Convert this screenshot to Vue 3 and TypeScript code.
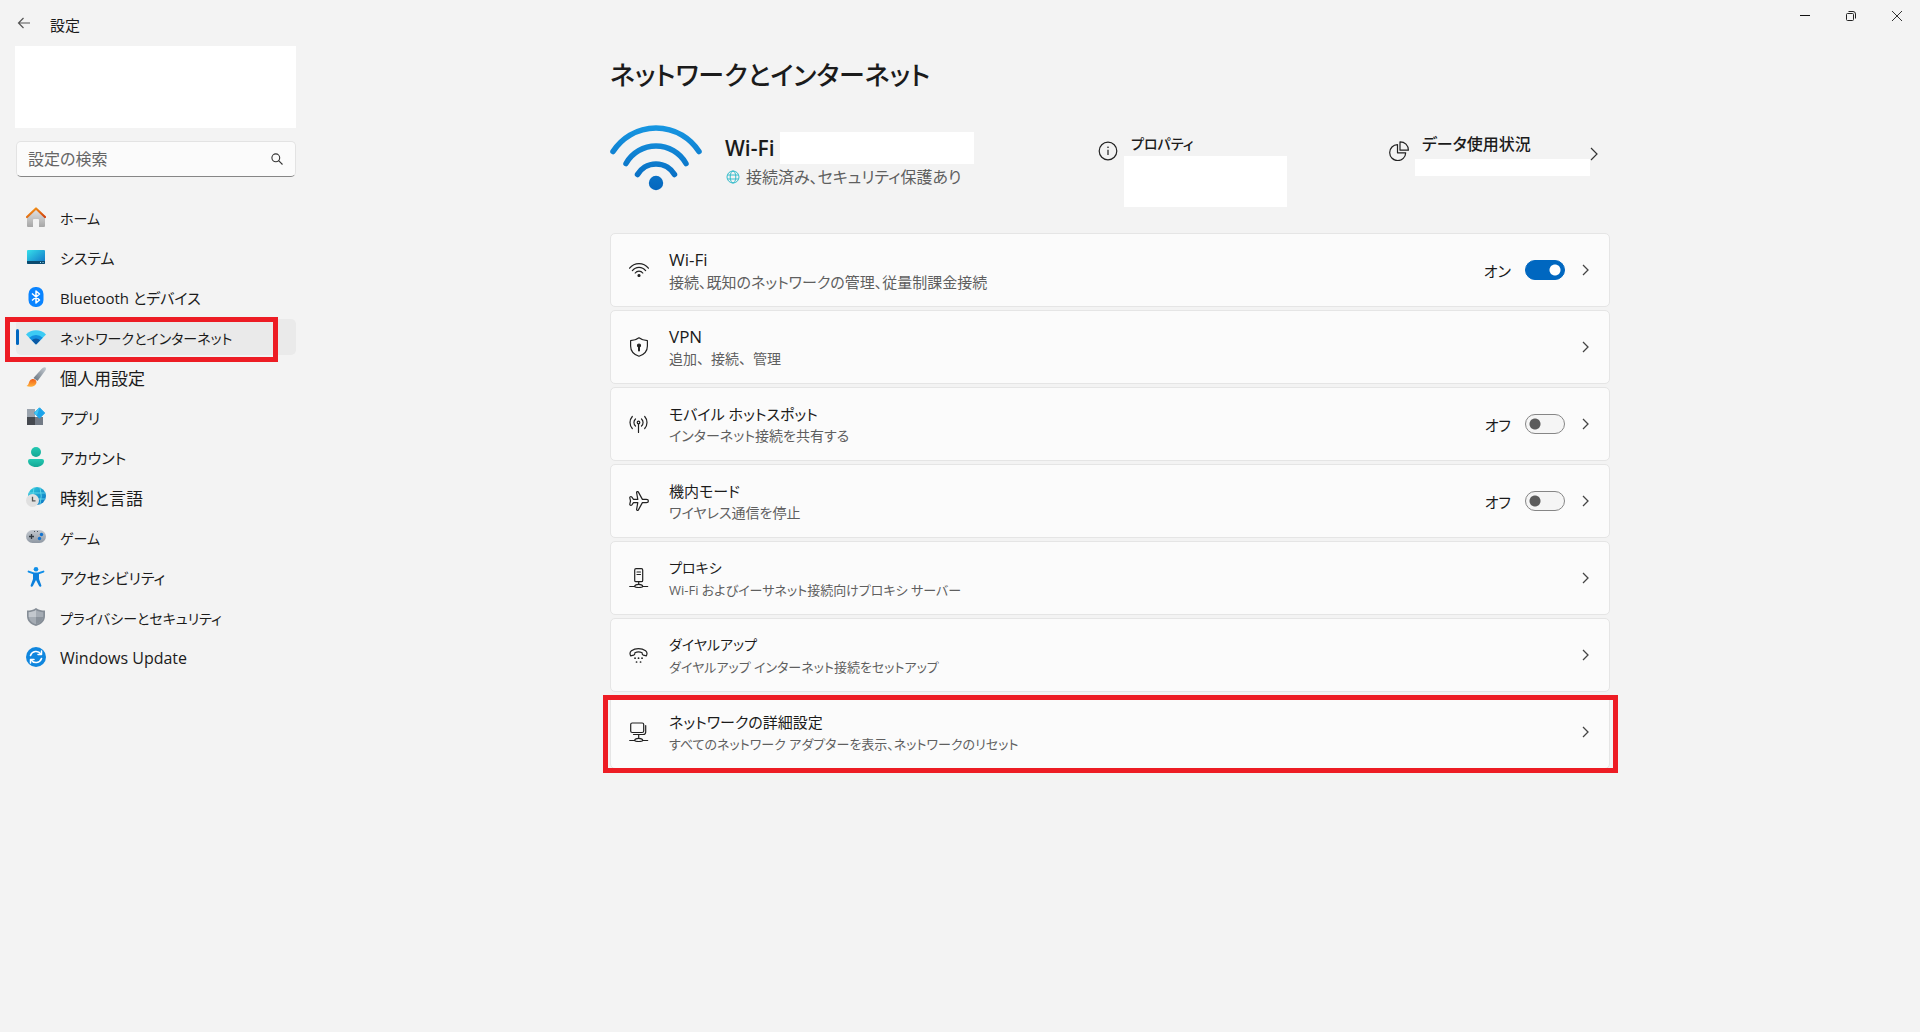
<script setup lang="ts">
import { ref } from 'vue'

type TextSize = 'xs' | 'sm' | 'md' | 'lg' | 'xl' | 'wide'

interface NavItem {
  id: string
  label: string
  size: TextSize
}

interface SettingCard {
  id: string
  title: string
  titleSize: TextSize
  description: string
  descriptionSize: TextSize
  toggle?: boolean
  marked?: boolean
}

const navItems: NavItem[] = [
  { id: 'home', label: 'ホーム', size: 'sm' },
  { id: 'system', label: 'システム', size: 'md' },
  { id: 'bluetooth', label: 'Bluetooth とデバイス', size: 'md' },
  { id: 'network', label: 'ネットワークとインターネット', size: 'sm' },
  { id: 'personal', label: '個人用設定', size: 'xl' },
  { id: 'apps', label: 'アプリ', size: 'md' },
  { id: 'account', label: 'アカウント', size: 'md' },
  { id: 'time', label: '時刻と言語', size: 'xl' },
  { id: 'game', label: 'ゲーム', size: 'sm' },
  { id: 'access', label: 'アクセシビリティ', size: 'md' },
  { id: 'privacy', label: 'プライバシーとセキュリティ', size: 'sm' },
  { id: 'update', label: 'Windows Update', size: 'lg' },
]

const cards: SettingCard[] = [
  { id: 'wifi', title: 'Wi-Fi', titleSize: 'xl', description: '接続、既知のネットワークの管理、従量制課金接続', descriptionSize: 'md', toggle: true },
  { id: 'vpn', title: 'VPN', titleSize: 'xl', description: '追加、接続、管理', descriptionSize: 'wide' },
  { id: 'hotspot', title: 'モバイル ホットスポット', titleSize: 'md', description: 'インターネット接続を共有する', descriptionSize: 'sm', toggle: true },
  { id: 'airplane', title: '機内モード', titleSize: 'md', description: 'ワイヤレス通信を停止', descriptionSize: 'sm', toggle: true },
  { id: 'proxy', title: 'プロキシ', titleSize: 'sm', description: 'Wi-Fi およびイーサネット接続向けプロキシ サーバー', descriptionSize: 'xs' },
  { id: 'dialup', title: 'ダイヤルアップ', titleSize: 'sm', description: 'ダイヤルアップ インターネット接続をセットアップ', descriptionSize: 'xs' },
  { id: 'advanced', title: 'ネットワークの詳細設定', titleSize: 'md', description: 'すべてのネットワーク アダプターを表示、ネットワークのリセット', descriptionSize: 'xs', marked: true },
]

const current = ref('network')
const query = ref('')
const switches = ref<Record<string, boolean>>({ wifi: true, hotspot: false, airplane: false })
</script>

<template>
  <div class="window">
    <header class="titlebar">
      <button class="back" type="button" aria-label="戻る">
        <svg width="14" height="12" viewBox="0 0 14 12" fill="none" stroke="#555" stroke-width="1.2"><path d="M13 6H1.5M6.5 1 1.5 6l5 5" /></svg>
      </button>
      <span class="app-name">設定</span>
      <div class="controls">
        <button type="button" aria-label="最小化">
          <svg width="12" height="12" viewBox="0 0 12 12"><path d="M1 5.5h10" stroke="#111" /></svg>
        </button>
        <button type="button" aria-label="元に戻す">
          <svg width="12" height="12" viewBox="0 0 12 12" fill="none" stroke="#222"><rect x="1.5" y="3.5" width="7" height="7" rx="1" /><path d="M3.5 1.5H8A2.5 2.5 0 0 1 10.5 4v4.5" /></svg>
        </button>
        <button type="button" aria-label="閉じる">
          <svg width="12" height="12" viewBox="0 0 12 12"><path d="m1 1 10 10M11 1 1 11" stroke="#333" /></svg>
        </button>
      </div>
    </header>

    <div class="body">
      <aside class="sidebar">
        <div class="profile"></div>
        <label class="search">
          <input v-model="query" type="search" placeholder="設定の検索" aria-label="設定の検索" />
          <svg width="12" height="12" viewBox="0 0 12 12" fill="none" stroke="#333" stroke-width="1.1"><circle cx="4.8" cy="4.8" r="3.9" /><path d="m7.6 7.6 3.9 3.9" /></svg>
        </label>
        <nav>
          <a
            v-for="item in navItems"
            :key="item.id"
            href="#"
            :class="['nav-item', item.size, { selected: item.id === current }]"
            @click.prevent="current = item.id"
          >
            <svg class="nav-icon" width="20" height="20" viewBox="0 0 20 20" fill="none">
              <template v-if="item.id === 'home'">
                <defs>
                  <linearGradient id="homeWall" x1="0" y1="0" x2="0" y2="1"><stop stop-color="#e4e4e4" /><stop offset="1" stop-color="#a6a6a6" /></linearGradient>
                  <linearGradient id="homeRoof" x1="0" y1="0" x2="1" y2="1"><stop stop-color="#f7a11b" /><stop offset="1" stop-color="#d13f0c" /></linearGradient>
                </defs>
                <path d="M1 9.5 10 2l9 7.5V19a1 1 0 0 1-1 1h-5v-7a1 1 0 0 0-1-1H8a1 1 0 0 0-1 1v7H2a1 1 0 0 1-1-1z" fill="url(#homeWall)" />
                <path d="M1 10 10 1.5 19 10" stroke="url(#homeRoof)" stroke-width="2.2" stroke-linecap="round" stroke-linejoin="round" />
              </template>
              <template v-else-if="item.id === 'system'">
                <defs><linearGradient id="sysBg" x1="0" y1="0" x2="1" y2="1"><stop stop-color="#36e0ea" /><stop offset="1" stop-color="#0f6fc6" /></linearGradient></defs>
                <rect x="1" y="3" width="18" height="14" rx="1" fill="url(#sysBg)" />
                <path d="M1 14h18v2a1 1 0 0 1-1 1H2a1 1 0 0 1-1-1z" fill="#0b4a6f" />
                <path d="M14 15.5h1m1.5 0h1" stroke="#9fe3f5" />
              </template>
              <template v-else-if="item.id === 'bluetooth'">
                <rect x="2.5" y="0" width="15" height="20" rx="7" fill="#0a84ff" />
                <path d="m6 6.5 7.5 6.5L10 16V4l3.5 3L6 13.5" stroke="#fff" stroke-width="1.5" stroke-linejoin="round" />
              </template>
              <template v-else-if="item.id === 'network'">
                <path d="M0 7.5a14 14 0 0 1 20 0L10 17.5z" fill="#3ccbf4" />
                <path d="M3.2 10.7a9.6 9.6 0 0 1 13.6 0L10 17.5z" fill="#1490df" />
                <path d="M5.8 13.3a6 6 0 0 1 8.4 0L10.7 17a1 1 0 0 1-1.4 0z" fill="#0c59a4" />
              </template>
              <template v-else-if="item.id === 'personal'">
                <defs>
                  <linearGradient id="brushHandle" x1="1" y1="0" x2="0" y2="1"><stop stop-color="#c5ccd3" /><stop offset="1" stop-color="#66717c" /></linearGradient>
                  <linearGradient id="brushTip" x1="0" y1="0" x2="0" y2="1"><stop stop-color="#f25c15" /><stop offset="1" stop-color="#ffb53e" /></linearGradient>
                </defs>
                <path d="M19.5 .5c1 1 .3 2.4-.5 3.6L11.5 14 7.5 11 15.5 2c1-1.100 2.800-2.500 4-1.500z" fill="url(#brushHandle)" />
                <path d="M4 13.5c1.5-2 4-2 5.5-.5s1.2 4-.5 5.300C6.500 20.200 3 20.200 .5 19c2.300-.8 2-3.500 3.500-5.500z" fill="url(#brushTip)" />
              </template>
              <template v-else-if="item.id === 'apps'">
                <rect x="1" y="2" width="8" height="8" fill="#9aa3ad" />
                <rect x="1" y="10" width="8" height="8" fill="#45494f" />
                <rect x="9" y="10" width="8" height="8" fill="#737b86" />
                <path d="M13.5 .8 18.7 6l-5.2 5.2L8.3 6z" fill="#1aa3ea" stroke="#1aa3ea" stroke-linejoin="round" />
                <path d="M13.5 .8 8.3 6l2.6 2.6z" fill="#40c8f4" />
              </template>
              <template v-else-if="item.id === 'account'">
                <defs><linearGradient id="accBg" x1="0" y1="0" x2="0" y2="1"><stop stop-color="#24c9b2" /><stop offset="1" stop-color="#14a795" /></linearGradient></defs>
                <circle cx="10" cy="5" r="5" fill="url(#accBg)" />
                <path d="M4 12h12a2 2 0 0 1 2 2c0 3.5-3.5 6-8 6s-8-2.5-8-6a2 2 0 0 1 2-2z" fill="url(#accBg)" />
              </template>
              <template v-else-if="item.id === 'time'">
                <defs><linearGradient id="globeBg" x1="0" y1="0" x2="1" y2="1"><stop stop-color="#2fd0dd" /><stop offset="1" stop-color="#0a6fc2" /></linearGradient></defs>
                <circle cx="11" cy="9" r="9" fill="url(#globeBg)" />
                <path d="M3 6h16.5M3 12h16.5M8 .5Q5.5 9 8 17.5M14 .5q2.5 8.5 0 17" stroke="#6ce0ee" stroke-width=".8" />
                <circle cx="6.5" cy="13.5" r="6.5" fill="#e0e0e0" />
                <path d="M6.5 9.8v4h3" stroke="#555" stroke-width="1.3" />
              </template>
              <template v-else-if="item.id === 'game'">
                <defs><linearGradient id="padBg" x1="0" y1="0" x2="0" y2="1"><stop stop-color="#c3c8cf" /><stop offset="1" stop-color="#8f98a3" /></linearGradient></defs>
                <rect y="3" width="20" height="13" rx="6.5" fill="url(#padBg)" />
                <path d="M5.5 7v5M3 9.5h5" stroke="#333a42" stroke-width="1.3" />
                <path d="M8 4.5h1m2 0h1" stroke="#4c545d" />
                <circle cx="15.5" cy="7.5" r="1.7" fill="#1272ce" /><circle cx="13.5" cy="11.5" r="1.7" fill="#1272ce" />
              </template>
              <template v-else-if="item.id === 'access'">
                <circle cx="10" cy="2.3" r="2.3" fill="#0f8ee9" />
                <path d="M2.6 4.6 8 6.5h4l5.4-1.9" stroke="#0f8ee9" stroke-width="2" stroke-linecap="round" />
                <path d="M7 6h6v6l2.3 6.3c.4 1.4-1.5 2.2-2.2.8L10 13l-3.1 6.1c-.7 1.4-2.6.6-2.2-.8L7 12z" fill="#0c80dc" />
              </template>
              <template v-else-if="item.id === 'privacy'">
                <path d="M10 1c2.5 2 5.5 2.5 9 2.5V9c0 5-3.5 8.3-9 10-5.5-1.7-9-5-9-10V3.5C4.5 3.5 7.5 3 10 1z" fill="#858d96" />
                <path d="M10 3c2 1.4 4.5 2 7.3 2.2V9c0 4-2.8 6.8-7.3 8.3C5.5 15.8 2.7 13 2.7 9V5.2C5.5 5 8 4.4 10 3z" fill="#a5acb4" />
                <path d="M10 3v7H2.7V5.2C5.5 5 8 4.4 10 3z" fill="#c3c8ce" />
                <path d="M10 10h7.2c-.5 3.6-3.2 6-7.2 7.3z" fill="#8a929b" />
              </template>
              <template v-else>
                <circle cx="10" cy="10" r="10" fill="#0f86de" />
                <path d="M4.5 8.5A5.8 5.8 0 0 1 14.8 7M15.5 11.5A5.8 5.8 0 0 1 5.2 13" stroke="#fff" stroke-width="1.6" stroke-linecap="round" />
                <path d="M15.5 4v3.5H12M4.5 16v-3.5H8" stroke="#fff" stroke-width="1.5" stroke-linecap="round" stroke-linejoin="round" />
              </template>
            </svg>
            <span>{{ item.label }}</span>
          </a>
        </nav>
      </aside>

      <main>
        <div class="content">
          <h1>ネットワークとインターネット</h1>

          <section class="status">
            <div class="connection">
              <svg width="92" height="66" viewBox="0 0 92 66" fill="none">
                <defs><linearGradient id="wifiBig" gradientUnits="userSpaceOnUse" x1="0" y1="0" x2="0" y2="66"><stop stop-color="#1797e2" /><stop offset="1" stop-color="#0566bd" /></linearGradient></defs>
                <g stroke="url(#wifiBig)" stroke-width="5.5" stroke-linecap="round">
                  <path d="M3 26.5a51 51 0 0 1 86 0" />
                  <path d="M16 38.5a34.5 34.5 0 0 1 60 0" />
                  <path d="M27.5 49.5a21.5 21.5 0 0 1 37 0" />
                </g>
                <circle cx="46" cy="58" r="7.2" fill="url(#wifiBig)" />
              </svg>
              <div class="connection-text">
                <div class="ssid"><h2>Wi-Fi</h2><span class="mask"></span></div>
                <p>
                  <svg width="14" height="14" viewBox="0 0 14 14" fill="none" stroke="#33bccb"><circle cx="7" cy="7" r="6" /><ellipse cx="7" cy="7" rx="2.8" ry="6" /><path d="M1.5 5h11M1.5 9h11" /></svg>
                  <span>接続済み、セキュリティ保護あり</span>
                </p>
              </div>
            </div>
            <a class="info" href="#">
              <svg width="20" height="20" viewBox="0 0 20 20" fill="none" stroke="#222" stroke-width="1.2"><circle cx="10" cy="10" r="8.8" /><path d="M10 8.8V14" /><circle cx="10" cy="6.2" r=".5" fill="#222" stroke-width=".6" /></svg>
              <div><h3 class="sm">プロパティ</h3><span class="mask"></span></div>
            </a>
            <a class="info usage" href="#">
              <svg width="20" height="20" viewBox="0 0 20 20" fill="none" stroke="#222" stroke-width="1.2" stroke-linejoin="round"><path d="M8.5 3.6a8 8 0 1 0 8.2 8.2H8.5z" /><path d="M11 .8v8.4h8.4C19.4 4.2 15.8 .8 11 .8z" /></svg>
              <div><h3 class="lg">データ使用状況</h3><span class="mask"></span></div>
              <svg class="chevron" width="8" height="14" viewBox="0 0 8 14" fill="none" stroke="#333" stroke-width="1.2"><path d="m1 1 6 6-6 6" /></svg>
            </a>
          </section>

          <ul class="cards">
            <li v-for="card in cards" :key="card.id" :class="['card', { marked: card.marked }]">
              <svg class="card-icon" width="20" height="20" viewBox="0 0 20 20" fill="none" stroke="#222" stroke-width="1.2" stroke-linejoin="round" stroke-linecap="round">
                <template v-if="card.id === 'wifi'">
                  <path d="M.6 8.2a12 12 0 0 1 18.8 0M3.4 10.6a8.3 8.3 0 0 1 13.2 0M6.2 13a4.8 4.8 0 0 1 7.6 0" />
                  <circle cx="10" cy="15.5" r="1" fill="#222" />
                </template>
                <template v-else-if="card.id === 'vpn'">
                  <path d="M10 .8c2.5 2 5.4 2.8 8.4 2.9V9c0 5-3.4 8.6-8.4 10.3C5 17.6 1.6 14 1.6 9V3.7C4.6 3.6 7.5 2.8 10 .8z" />
                  <circle cx="10" cy="8.5" r="1.5" fill="#222" /><path d="M10 9v4.5" stroke-width="2" />
                </template>
                <template v-else-if="card.id === 'hotspot'">
                  <circle cx="9.5" cy="8.5" r="1.3" /><path d="M9.5 10v8.5M6.5 12a4.7 4.7 0 0 1 0-7M12.5 12a4.7 4.7 0 0 0 0-7M3.3 14.5a9 9 0 0 1 0-12M15.7 14.5a9 9 0 0 0 0-12" />
                </template>
                <template v-else-if="card.id === 'airplane'">
                  <path d="M19.4 10c0 1-1 1.6-2 1.6h-4l-4 7.3c-.6 1-2 .5-1.8-.6l1.2-6.7H4.5l-1.6 2.2c-.9 1-2.3.4-2.1-.7L1.5 10 .8 6.9c-.2-1.1 1.2-1.7 2.1-.7l1.6 2.2h4.3L7.6 1.7C7.4.6 8.8.1 9.4 1.1l4 7.3h4c1 0 2 .6 2 1.6z" />
                </template>
                <template v-else-if="card.id === 'proxy'">
                  <rect x="5.7" y=".7" width="8" height="13" rx="1.3" /><path d="M8 4h3.5M8 6.5h3.5M9.7 13.7v2M.7 18.5h5M13.7 18.5h5" /><path d="M5.7 18.5c0-1.5 2-2.2 4-2.2s4 .7 4 2.2c0 1.3-8 1.3-8 0z" />
                </template>
                <template v-else-if="card.id === 'dialup'">
                  <path d="M1.6 10.8C.6 8.5.6 7 2.4 5.7 6.5 2.8 12.5 2.8 16.600 5.700c1.800 1.300 1.800 2.800.8 5.100l-3.100-.6c-1-.3-1.300-1-1.200-2.500-2.200-1-5-1-7.200 0 .1 1.500-.2 2.200-1.200 2.500z" />
                  <path d="M6 13.2h.1M9.5 13.2h.1M13 13.2h.1M7.5 17h.1M11.500 17h.1" stroke-width="1.7" />
                </template>
                <template v-else>
                  <rect x="1.7" y="1" width="13" height="9.5" rx="1.5" /><path d="M16.7 3.5V10a2.5 2.5 0 0 1-2.5 2.5H4.5M9.7 12.5v3M.7 18.5h5M13.7 18.5h5" /><path d="M5.7 18.5c0-1.5 2-2.2 4-2.2s4 .7 4 2.2c0 1.3-8 1.3-8 0z" />
                </template>
              </svg>
              <div class="card-text">
                <h4 :class="card.titleSize">{{ card.title }}</h4>
                <p :class="card.descriptionSize">{{ card.description }}</p>
              </div>
              <label v-if="card.toggle" class="switch">
                <span>{{ switches[card.id] ? 'オン' : 'オフ' }}</span>
                <input v-model="switches[card.id]" type="checkbox" role="switch" :aria-label="card.title" />
              </label>
              <button class="open" type="button" :aria-label="card.title">
                <svg width="8" height="12" viewBox="0 0 8 12" fill="none" stroke="#444" stroke-width="1.3"><path d="m1 1 5 5-5 5" /></svg>
              </button>
            </li>
          </ul>
        </div>
      </main>
    </div>
  </div>
</template>

<style>
body {
  background: #f3f3f3;
}
</style>

<style scoped>
* {
  box-sizing: border-box;
}

.window {
  min-height: 100vh;
  background: #f3f3f3;
  color: #1b1b1b;
  font-family: "Open Sans", "Noto Sans CJK JP", sans-serif;
  font-size: 16px;
  font-feature-settings: "palt";
}

h1, h2, h3, h4, p, ul {
  margin: 0;
  padding: 0;
  font-weight: 400;
}

svg {
  display: block;
  flex: none;
}

a {
  color: inherit;
  text-decoration: none;
}

button {
  display: grid;
  place-items: center;
  padding: 0;
  border: 0;
  background: none;
}

.xs {
  font-size: 13px;
}

.sm {
  font-size: 14px;
}

.md {
  font-size: 15px;
}

.lg {
  font-size: 16px;
}

.xl {
  font-size: 17px;
}

.wide {
  font-size: 14px;
  font-feature-settings: normal;
}

.titlebar {
  display: flex;
  align-items: center;
  height: 46px;
  padding-left: 8px;
}

.back {
  width: 32px;
  height: 32px;
}

.app-name {
  margin-left: 10px;
  padding-top: 2px;
  font-size: 15px;
}

.controls {
  display: flex;
  align-self: flex-start;
  margin-left: auto;
}

.controls button {
  width: 46px;
  height: 32px;
}

.body {
  display: flex;
}

.sidebar {
  flex: none;
  width: 300px;
  padding: 0 4px 0 16px;
}

.profile {
  height: 82px;
  margin-left: -1px;
  background: #fff;
}

.search {
  display: flex;
  align-items: center;
  height: 36px;
  margin-top: 13px;
  padding: 0 12px 0 11px;
  border: 1px solid #e3e3e3;
  border-bottom-color: #868686;
  border-radius: 5px;
  background: #fbfbfb;
}

.search input {
  flex: 1;
  min-width: 0;
  padding: 0;
  border: 0;
  outline: 0;
  background: none;
  color: inherit;
  font: inherit;
  font-feature-settings: inherit;
}

.search input::placeholder {
  color: #666;
}

nav {
  display: flex;
  flex-direction: column;
  gap: 4px;
  margin-top: 22px;
}

.nav-item {
  position: relative;
  display: flex;
  align-items: center;
  gap: 14px;
  height: 36px;
  padding-left: 10px;
  border-radius: 5px;
  white-space: nowrap;
}

.nav-item span {
  padding-top: 1px;
}

.selected {
  background: #eaeaea;
}

.selected::before {
  position: absolute;
  top: 10px;
  left: 0;
  width: 3px;
  height: 16px;
  border-radius: 2px;
  background: #0067c0;
  content: "";
}

.selected::after {
  position: absolute;
  inset: -2px 18px -7px -11px;
  border: 5px solid #ed1c24;
  content: "";
}

main {
  flex: 1;
  min-width: 0;
}

.content {
  max-width: 1000px;
  margin: 0 auto;
}

h1 {
  padding-top: 5px;
  font-size: 26px;
  font-weight: 500;
  line-height: 48px;
}

.status {
  display: grid;
  grid-template-columns: 488fr 291fr 221fr;
  align-items: start;
  margin-top: 25px;
  min-height: 109px;
}

.connection {
  display: flex;
  gap: 23px;
  padding-top: 1px;
}

.connection-text {
  padding-top: 7px;
}

.ssid {
  display: flex;
  align-items: center;
  gap: 5px;
}

.mask {
  display: block;
  background: #fff;
}

.ssid .mask {
  width: 194px;
  height: 32px;
}

h2 {
  font-size: 21px;
  font-weight: 600;
  line-height: 32px;
}

.connection p {
  display: flex;
  align-items: center;
  gap: 6px;
  padding-left: 1px;
  color: #5f5f5f;
  line-height: 26px;
}

.info {
  display: flex;
  padding-top: 8px;
}

.info > svg {
  margin-top: 9px;
}

.info > div {
  flex: none;
  margin-left: 6px;
}

h3 {
  padding-left: 7px;
  font-weight: 500;
  line-height: 24px;
}

.info .mask {
  width: 163px;
  height: 51px;
}

.usage .mask {
  width: 175px;
  height: 17px;
  margin-top: 3px;
}

.info > .chevron {
  margin-top: 15px;
}

.cards {
  display: flex;
  flex-direction: column;
  gap: 3px;
  list-style: none;
}

.card {
  position: relative;
  display: flex;
  align-items: center;
  height: 74px;
  padding: 0 11px 0 18px;
  border: 1px solid #e5e5e5;
  border-radius: 5px;
  background: #fbfbfb;
}

.marked::after {
  position: absolute;
  inset: -1px -9px -5px -8px;
  border: 5px solid #ed1c24;
  content: "";
  pointer-events: none;
}

.card-text {
  flex: 1;
  margin-left: 20px;
  padding-top: 2px;
}

h4 {
  line-height: 22px;
}

.card-text p {
  color: #5f5f5f;
  line-height: 22px;
}

.switch {
  display: flex;
  align-items: center;
  gap: 14px;
  font-size: 15px;
}

.switch input {
  width: 40px;
  height: 20px;
  margin: 0;
  border: 1px solid #868686;
  border-radius: 10px;
  background: radial-gradient(circle at 9px 9px, #5c5c5c 5px, transparent 6px) #f5f5f5;
  appearance: none;
}

.switch input:checked {
  border-color: #0067c0;
  background: radial-gradient(circle at 29px 9px, #fff 5px, transparent 6px) #0067c0;
}

.open {
  width: 24px;
  height: 32px;
  margin-left: 9px;
}
</style>
